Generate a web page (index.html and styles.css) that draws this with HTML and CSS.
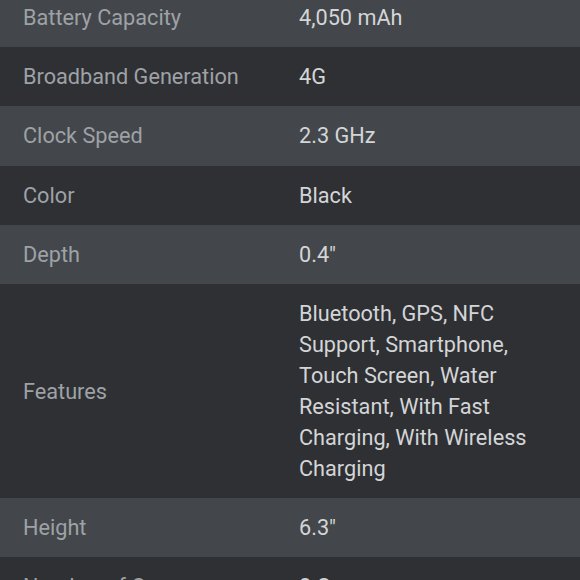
FILE: index.html
```html
<!DOCTYPE html>
<html>
<head>
<meta charset="utf-8">
<link rel="stylesheet" href="styles.css">
</head>
<body>
<div class="specs">
  <div class="row light"><div class="label">Battery Capacity</div><div class="value">4,050 mAh</div></div>
  <div class="row dark"><div class="label">Broadband Generation</div><div class="value">4G</div></div>
  <div class="row light"><div class="label">Clock Speed</div><div class="value">2.3 GHz</div></div>
  <div class="row dark"><div class="label">Color</div><div class="value">Black</div></div>
  <div class="row light"><div class="label">Depth</div><div class="value">0.4"</div></div>
  <div class="row dark"><div class="label">Features</div><div class="value">Bluetooth, GPS, NFC Support, Smartphone, Touch Screen, Water Resistant, With Fast Charging, With Wireless Charging</div></div>
  <div class="row light"><div class="label">Height</div><div class="value">6.3"</div></div>
  <div class="row dark"><div class="label">Number of Cores</div><div class="value">8 Cores</div></div>
</div>
</body>
</html>
```
FILE: styles.css
```css
html, body {
  margin: 0;
  padding: 0;
  background: #2f3034;
  overflow: hidden;
}
.specs {
  margin-top: -12px;
  font-family: Roboto, "Liberation Sans", sans-serif;
  font-size: 21.7px;
  line-height: 31px;
}
.row {
  display: grid;
  grid-template-columns: 276px 1fr;
  align-items: center;
  padding: 14.1px 0;
}
.light { background: #43474b; }
.dark { background: #2f3034; }
.label {
  padding-left: 23px;
  color: #9ea2a6;
}
.value {
  padding: 0 30px 0 23px;
  color: #d3d5d7;
}
```
